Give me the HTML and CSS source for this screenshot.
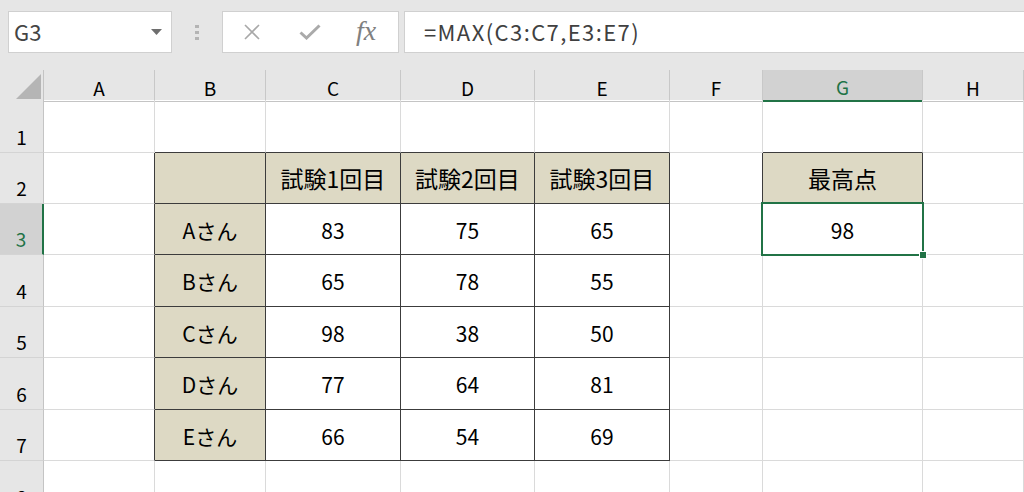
FILE: index.html
```html
<!DOCTYPE html>
<html lang="ja">
<head>
    <meta charset="UTF-8">
    <title>MAX関数</title>
    <link rel="stylesheet" href="styles.css">
</head>
<body>

<div class="toolbar">
    <div class="name-box">
        <span>G3</span>
        <svg class="drop" width="11" height="6" viewBox="0 0 11 6"><polygon points="0,0 11,0 5.5,6" fill="#6e6e6e"/></svg>
    </div>
    <div class="grip"><i></i><i></i><i></i></div>
    <div class="fx-buttons">
        <svg width="18" height="16" viewBox="0 0 18 16"><path d="M2 1 L16 15 M16 1 L2 15" stroke="#a8a8a8" stroke-width="1.6" fill="none"/></svg>
        <svg width="22" height="16" viewBox="0 0 22 16"><path d="M1.5 8.5 L7.5 14 L20.5 1.5" stroke="#aaaaaa" stroke-width="3" fill="none"/></svg>
        <span class="fx">fx</span>
    </div>
    <div class="formula">=MAX(C3:C7,E3:E7)</div>
</div>

<div class="sheet">
    <div class="row head">
        <div class="corner"><svg width="25" height="25" viewBox="0 0 25 25"><polygon points="25,0 25,25 0,25" fill="#b5b5b5"/></svg></div>
        <div class="ch">A</div>
        <div class="ch">B</div>
        <div class="ch">C</div>
        <div class="ch">D</div>
        <div class="ch">E</div>
        <div class="ch">F</div>
        <div class="ch sel">G</div>
        <div class="ch">H</div>
    </div>

    <div class="row r1">
        <div class="rh">1</div>
        <div class="c"></div>
        <div class="c tb"></div>
        <div class="c tb"></div>
        <div class="c tb"></div>
        <div class="c tb"></div>
        <div class="c"></div>
        <div class="c tb"></div>
        <div class="c"></div>
    </div>

    <div class="row r2">
        <div class="rh">2</div>
        <div class="c tr"></div>
        <div class="c t fill"></div>
        <div class="c t fill kanji">試験1回目</div>
        <div class="c t fill kanji">試験2回目</div>
        <div class="c t fill kanji">試験3回目</div>
        <div class="c tr"></div>
        <div class="c t fill kanji">最高点</div>
        <div class="c"></div>
    </div>

    <div class="row r3">
        <div class="rh sel">3</div>
        <div class="c tr"></div>
        <div class="c t fill">Aさん</div>
        <div class="c t">83</div>
        <div class="c t">75</div>
        <div class="c t">65</div>
        <div class="c"></div>
        <div class="c active">98<span class="handle"></span></div>
        <div class="c"></div>
    </div>

    <div class="row r4">
        <div class="rh">4</div>
        <div class="c tr"></div>
        <div class="c t fill">Bさん</div>
        <div class="c t">65</div>
        <div class="c t">78</div>
        <div class="c t">55</div>
        <div class="c"></div>
        <div class="c"></div>
        <div class="c"></div>
    </div>

    <div class="row r5">
        <div class="rh">5</div>
        <div class="c tr"></div>
        <div class="c t fill">Cさん</div>
        <div class="c t">98</div>
        <div class="c t">38</div>
        <div class="c t">50</div>
        <div class="c"></div>
        <div class="c"></div>
        <div class="c"></div>
    </div>

    <div class="row r6">
        <div class="rh">6</div>
        <div class="c tr"></div>
        <div class="c t fill">Dさん</div>
        <div class="c t">77</div>
        <div class="c t">64</div>
        <div class="c t">81</div>
        <div class="c"></div>
        <div class="c"></div>
        <div class="c"></div>
    </div>

    <div class="row r7">
        <div class="rh">7</div>
        <div class="c tr"></div>
        <div class="c t fill">Eさん</div>
        <div class="c t">66</div>
        <div class="c t">54</div>
        <div class="c t">69</div>
        <div class="c"></div>
        <div class="c"></div>
        <div class="c"></div>
    </div>

    <div class="row r8">
        <div class="rh">8</div>
        <div class="c"></div>
        <div class="c"></div>
        <div class="c"></div>
        <div class="c"></div>
        <div class="c"></div>
        <div class="c"></div>
        <div class="c"></div>
        <div class="c"></div>
    </div>
</div>

</body>
</html>
```

FILE: styles.css
```css
* {
    box-sizing: border-box;
}

body {
    margin: 0;
    width: 1024px;
    height: 492px;
    overflow: hidden;
    background-color: #e6e6e6;
    font-family: "Noto Sans CJK JP", "Noto Sans", sans-serif;
    color: #000;
}

/* formula bar */
.toolbar {
    height: 70px;
    padding: 11px 0 0 8px;
    display: flex;
    align-items: flex-start;
}

.name-box {
    width: 164px;
    height: 42px;
    background-color: #fff;
    border: 1px solid #d0d0d0;
    display: flex;
    align-items: center;
    justify-content: space-between;
    padding: 0 9px 2px 5px;
    font-size: 22px;
    color: #444;
}

.name-box .drop {
    margin-top: 2px;
}

.grip {
    width: 50px;
    height: 42px;
    display: flex;
    flex-direction: column;
    align-items: center;
    justify-content: center;
    gap: 3px;
}

.grip i {
    width: 4px;
    height: 3px;
    background-color: #b4b4b4;
}

.fx-buttons {
    width: 177px;
    height: 42px;
    background-color: #fff;
    border: 1px solid #d0d0d0;
    display: flex;
    align-items: center;
    padding-left: 20px;
    gap: 38px;
}

.fx {
    font-family: "Liberation Serif", serif;
    font-style: italic;
    font-size: 28px;
    color: #808080;
    margin-left: -3px;
    padding-bottom: 3px;
}

.formula {
    flex: 1;
    height: 42px;
    margin-left: 5px;
    background-color: #fff;
    border: 1px solid #d0d0d0;
    border-right: none;
    padding: 0 0 2px 19px;
    display: flex;
    align-items: center;
    font-size: 22px;
    letter-spacing: 1.4px;
    color: #404040;
}

/* grid */
.row {
    display: grid;
    grid-template-columns: 44px 111px 111px 135px 134px 135px 93px 160px 1fr;
    background-color: #fff;
}

.head { height: 30px; background-color: #e6e6e6; }
.r1 { height: 53px; }
.r2 { height: 51px; }
.r3 { height: 51px; }
.r4 { height: 52px; }
.r5 { height: 51px; }
.r6 { height: 52px; }
.r7 { height: 51px; }
.r8 { height: 52px; }

.corner {
    border-right: 1px solid #c4c4c4;
    border-bottom: 1px solid #c4c4c4;
    display: flex;
    align-items: flex-end;
    justify-content: flex-end;
    padding: 0 2px 2px 0;
}

.ch {
    border-right: 1px solid #c8c8c8;
    border-bottom: 1px solid #c4c4c4;
    display: flex;
    align-items: center;
    justify-content: center;
    padding-top: 3px;
    font-size: 19px;
}

.ch.sel {
    background-color: #d2d2d2;
    color: #217346;
    border-bottom: 2px solid #217346;
}

.rh {
    background-color: #e6e6e6;
    border-right: 1px solid #c4c4c4;
    border-bottom: 1px solid #d4d4d4;
    display: flex;
    align-items: flex-end;
    justify-content: center;
    padding-bottom: 2px;
    font-size: 19px;
}

.rh.sel {
    background-color: #d2d2d2;
    color: #217346;
    border-right: 2px solid #217346;
}

.c {
    border-right: 1px solid #dadada;
    border-bottom: 1px solid #dadada;
    display: flex;
    align-items: center;
    justify-content: center;
    padding-top: 1px;
    font-size: 21px;
    position: relative;
}

.c.kanji {
    font-size: 23px;
    padding-top: 0;
}

/* table borders */
.c.t {
    border-right-color: #3c3c3c;
    border-bottom-color: #3c3c3c;
}

.c.tr {
    border-right-color: #3c3c3c;
}

.c.tb {
    border-bottom-color: #3c3c3c;
}

.fill {
    background-color: #ddd9c4;
}

/* selected cell */
.active {
    z-index: 1;
}

.active::before {
    content: "";
    position: absolute;
    top: -2px;
    left: -2px;
    right: -2px;
    bottom: -2px;
    border: 2px solid #217346;
}

.handle {
    position: absolute;
    right: -5px;
    bottom: -5px;
    width: 8px;
    height: 8px;
    background-color: #217346;
    border: 1px solid #fff;
}
```
